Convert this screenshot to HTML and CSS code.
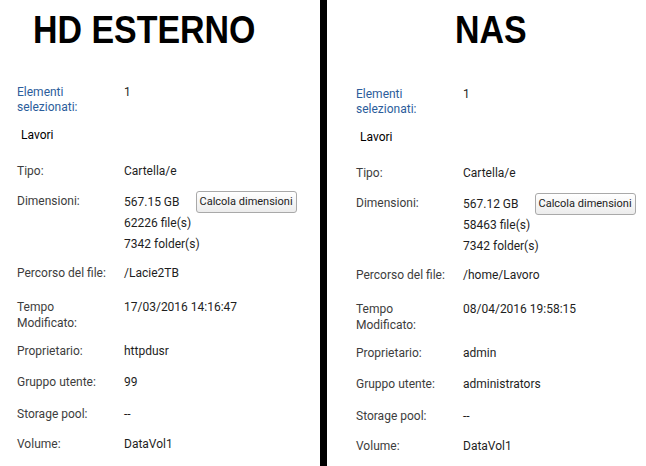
FILE: index.html
```html
<!DOCTYPE html>
<html lang="it">
<head>
<meta charset="utf-8">
<title>HD Esterno vs NAS</title>
<link rel="stylesheet" href="styles.css">
</head>
<body>
<div class="compare">
  <section class="panel panel-left">
    <h1 class="title title-hd"><span class="title-text">HD ESTERNO</span></h1>
    <div class="props">
      <div class="row row-first"><span class="label label-blue">Elementi<br>selezionati:</span><span class="value value-blue">1</span></div>
      <div class="row row-name">Lavori</div>
      <div class="row row-type"><span class="label">Tipo:</span><span class="value">Cartella/e</span></div>
      <div class="row row-size">
        <span class="label">Dimensioni:</span>
        <div class="value">
          <div class="size-line"><span>567.15 GB</span><button class="btn">Calcola dimensioni</button></div>
          <div>62226 file(s)</div>
          <div>7342 folder(s)</div>
        </div>
      </div>
      <div class="row row-path"><span class="label">Percorso del file:</span><span class="value">/Lacie2TB</span></div>
      <div class="row row-time"><span class="label">Tempo<br>Modificato:</span><span class="value">17/03/2016 14:16:47</span></div>
      <div class="row row-owner"><span class="label">Proprietario:</span><span class="value">httpdusr</span></div>
      <div class="row row-group"><span class="label">Gruppo utente:</span><span class="value">99</span></div>
      <div class="row row-pool"><span class="label">Storage pool:</span><span class="value">--</span></div>
      <div class="row"><span class="label">Volume:</span><span class="value">DataVol1</span></div>
    </div>
  </section>
  <div class="divider"></div>
  <section class="panel panel-right">
    <h1 class="title title-nas"><span class="title-text">NAS</span></h1>
    <div class="props">
      <div class="row row-first"><span class="label label-blue">Elementi<br>selezionati:</span><span class="value value-blue">1</span></div>
      <div class="row row-name">Lavori</div>
      <div class="row row-type"><span class="label">Tipo:</span><span class="value">Cartella/e</span></div>
      <div class="row row-size">
        <span class="label">Dimensioni:</span>
        <div class="value">
          <div class="size-line"><span>567.12 GB</span><button class="btn">Calcola dimensioni</button></div>
          <div>58463 file(s)</div>
          <div>7342 folder(s)</div>
        </div>
      </div>
      <div class="row row-path"><span class="label">Percorso del file:</span><span class="value">/home/Lavoro</span></div>
      <div class="row row-time"><span class="label">Tempo<br>Modificato:</span><span class="value">08/04/2016 19:58:15</span></div>
      <div class="row row-owner"><span class="label">Proprietario:</span><span class="value">admin</span></div>
      <div class="row row-group"><span class="label">Gruppo utente:</span><span class="value">administrators</span></div>
      <div class="row row-pool"><span class="label">Storage pool:</span><span class="value">--</span></div>
      <div class="row"><span class="label">Volume:</span><span class="value">DataVol1</span></div>
    </div>
  </section>
</div>
</body>
</html>
```

FILE: styles.css
```css
* { box-sizing: border-box; }
html, body { margin: 0; padding: 0; background: #fff; }
body {
  width: 646px;
  height: 466px;
  overflow: hidden;
  font-family: Roboto, "Liberation Sans", sans-serif;
  font-size: 12px;
  color: #222;
}
.compare {
  display: flex;
  height: 466px;
}
.panel { flex: 0 0 auto; }
.panel-left { width: 320px; padding-left: 17px; }
.panel-right { width: 319px; padding-left: 29px; }
.divider { width: 7px; background: #000; flex: 0 0 7px; }

.title {
  margin: 0;
  padding-top: 10px;
  font-family: "Liberation Sans", Arial, sans-serif;
  font-weight: bold;
  font-size: 39px;
  line-height: 40px;
  color: #000;
  white-space: nowrap;
}
.title-text {
  display: inline-block;
  transform: scaleX(0.87);
  transform-origin: left center;
}
.title-hd { padding-left: 16px; }
.title-nas { padding-left: 99px; }

.props { padding-top: 35px; }
.panel-right .props { padding-top: 37px; }

.row {
  display: grid;
  grid-template-columns: 107px auto;
  line-height: 15px;
  margin-top: 15px;
}
.row-first { margin-top: 0; }
.row-name { display: block; margin-top: 13px; padding-left: 4px; color: #000; }
.row-type { margin-top: 21px; }
.row-size { line-height: 21px; margin-top: 12px; }
.row-path { margin-top: 11px; }
.row-time { margin-top: 18px; line-height: 16px; }
.row-owner { margin-top: 13px; }
.row-group { margin-top: 16px; }
.row-pool { margin-top: 17px; }

.label { color: #3d3d3d; }
.label-blue, .value-blue { color: #2b5d9b; }
.value { color: #1e1e1e; }

.size-line { display: flex; align-items: center; }
.btn {
  margin-left: 16px;
  height: 22px;
  padding: 0 3px;
  font-family: Roboto, "Liberation Sans", sans-serif;
  font-size: 11px;
  color: #222;
  background: linear-gradient(#ffffff, #ececec);
  border: 1px solid #a9a9a9;
  border-radius: 3px;
  line-height: 20px;
}
```
